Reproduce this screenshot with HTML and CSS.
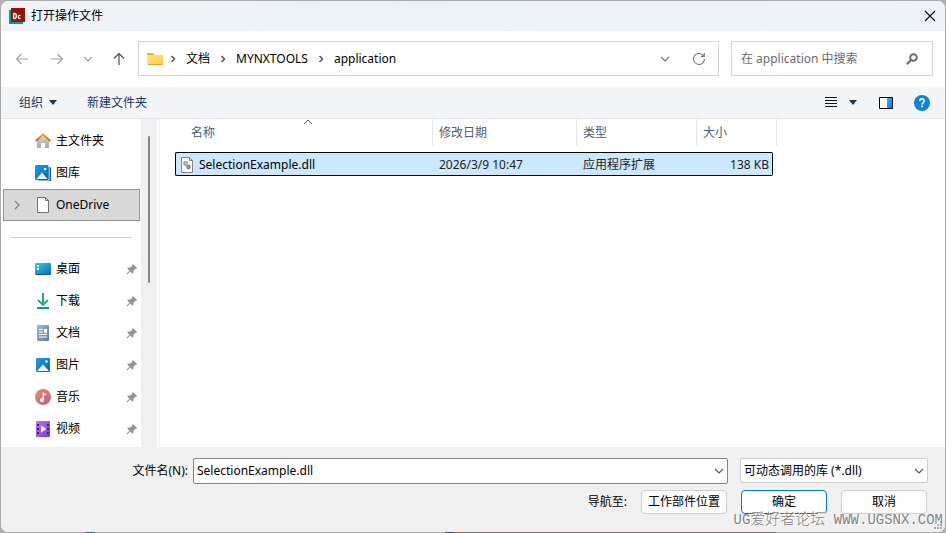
FILE: index.html
```html
<!DOCTYPE html>
<html lang="zh-CN">
<head>
<meta charset="utf-8">
<title>打开操作文件</title>
<link rel="stylesheet" href="styles.css">
</head>
<body>
<svg class="defs" aria-hidden="true">
  <defs>
    <linearGradient id="folder" x1="0" y1="0" x2="1" y2="1"><stop offset="0" stop-color="#ffe794"/><stop offset="1" stop-color="#ffc938"/></linearGradient>
    <linearGradient id="blue" x1="0" y1="0" x2="1" y2="1"><stop offset="0" stop-color="#1c9ee8"/><stop offset="1" stop-color="#0664b8"/></linearGradient>
    <linearGradient id="pane" x1="0" y1="0" x2="1" y2="1"><stop offset="0" stop-color="#30b4f2"/><stop offset="1" stop-color="#0a7fd6"/></linearGradient>
    <linearGradient id="teal" x1="0" y1="0" x2="1" y2="1"><stop offset="0" stop-color="#35d0de"/><stop offset="1" stop-color="#0b66c0"/></linearGradient>
    <linearGradient id="wall" x1="0" y1="0" x2="0" y2="1"><stop offset="0" stop-color="#d6d6d6"/><stop offset="1" stop-color="#a9a9a9"/></linearGradient>
    <linearGradient id="roof" x1="0" y1="0" x2="1" y2="0"><stop offset="0" stop-color="#d8601c"/><stop offset=".5" stop-color="#f8a030"/><stop offset="1" stop-color="#d8601c"/></linearGradient>
    <linearGradient id="slate" x1="0" y1="0" x2="1" y2="1"><stop offset="0" stop-color="#a5bad0"/><stop offset="1" stop-color="#5f7c9e"/></linearGradient>
    <linearGradient id="green" x1="0" y1="0" x2="0" y2="1"><stop offset="0" stop-color="#3cc08c"/><stop offset="1" stop-color="#129b8c"/></linearGradient>
    <linearGradient id="music" x1="0" y1="0" x2="1" y2="1"><stop offset="0" stop-color="#ee8d59"/><stop offset="1" stop-color="#b0609a"/></linearGradient>
    <linearGradient id="violet" x1="0" y1="0" x2="1" y2="1"><stop offset="0" stop-color="#b377f0"/><stop offset="1" stop-color="#7f37d8"/></linearGradient>
    <symbol id="pin" viewBox="0 0 12 12"><path fill="#8b979f" d="M7 1 11 5 10 6 9.300 5.800 7.500 7.800 7.400 10 6.500 10.800 4.200 8.600 1.500 11.300.7 11.300.7 10.500 3.400 7.800 1.200 5.500 2 4.600 4.300 4.600 6.300 2.700 6.100 1.900Z"/></symbol>
    <symbol id="next" viewBox="0 0 6 8"><path d="M1.500 1 4.500 4 1.500 7" fill="none" stroke="#555" stroke-width="1.500"/></symbol>
    <symbol id="down" viewBox="0 0 10 6"><path d="M1 1 5 5 9 1" fill="none" stroke="currentColor" stroke-width="1.100"/></symbol>
  </defs>
</svg>
<main class="dialog">
  <header class="titlebar">
    <svg class="app" width="16" height="16" viewBox="0 0 16 16"><path fill="#07999b" d="M0 2h14v14H0z"/><path fill="#94130b" d="M2 0h14v14H2z"/><path fill="none" stroke="#fff" stroke-width="1.300" d="M4.600 5.500v5M4.600 5.500h1q1.700 0 1.700 2.500t-1.700 2.500h-1M11.500 7.700q-2.200-.9-2.200 1.200t2.200 1.300"/></svg>
    <h1>打开操作文件</h1>
    <button class="close" aria-label="关闭"><svg width="12" height="12" viewBox="0 0 12 12"><path d="M1 1 11 11M11 1 1 11" stroke="#111" stroke-width="1.200"/></svg></button>
  </header>

  <nav class="navbar" aria-label="导航">
    <div class="arrows">
      <button aria-label="后退"><svg width="14" height="14" viewBox="0 0 14 14"><path d="M13 7H1.500M6.500 2l-5 5 5 5" fill="none" stroke="#a3a3a3" stroke-width="1.200"/></svg></button>
      <button aria-label="前进"><svg width="14" height="14" viewBox="0 0 14 14"><path d="M1 7h11.500M7.500 2l5 5-5 5" fill="none" stroke="#a3a3a3" stroke-width="1.200"/></svg></button>
      <button class="recent" aria-label="最近位置"><svg width="10" height="6"><use href="#down"/></svg></button>
      <button aria-label="上移"><svg width="14" height="14" viewBox="0 0 14 14"><path d="M7 13V1.500M2 6.500l5-5 5 5" fill="none" stroke="#5c5c5c" stroke-width="1.300"/></svg></button>
    </div>
    <div class="address">
      <svg width="16" height="14" viewBox="0 0 16 14"><path fill="#f3ac12" d="M0 2Q0 1 1 1h4.500L7.500 3H15q1 0 1 1v5H0z"/><rect y="3" width="16" height="10" rx="1" fill="url(#folder)"/><path stroke="#e0a526" d="M1 12.500h14"/></svg>
      <svg width="6" height="8"><use href="#next"/></svg>
      <a href="#docs">文档</a>
      <svg width="6" height="8"><use href="#next"/></svg>
      <a href="#tools">MYNXTOOLS</a>
      <svg width="6" height="8"><use href="#next"/></svg>
      <a href="#application">application</a>
      <button class="history" aria-label="以前的位置"><svg width="10" height="6"><use href="#down"/></svg></button>
      <button aria-label="刷新"><svg width="14" height="14" viewBox="0 0 14 14"><path d="M12.500 7A5.500 5.500 0 1 1 10.800 3L12 4.200M12.300 1v3.500H8.800" fill="none" stroke="#777" stroke-width="1.100"/></svg></button>
    </div>
    <form class="search">
      <input type="text" aria-label="搜索" placeholder="在 application 中搜索">
      <button type="button" aria-label="搜索"><svg width="12" height="12" viewBox="0 0 12 12"><circle cx="7.500" cy="4.500" r="3.300" fill="none" stroke="#6a6a6a" stroke-width="1.900"/><path d="M5 7 .8 11.200" stroke="#6a6a6a" stroke-width="2"/></svg></button>
    </form>
  </nav>

  <div class="toolbar">
    <button>组织 <svg class="caret" width="8" height="5" viewBox="0 0 8 5"><path d="M0 0h8L4 5z" fill="#1c3763"/></svg></button>
    <button>新建文件夹</button>
    <div class="views">
      <button aria-label="视图"><svg width="12" height="11" viewBox="0 0 12 11"><path d="M0 .5h12M0 3.500h12M0 6.500h12M0 9.500h12" stroke="#111"/></svg></button>
      <button class="more" aria-label="更多视图"><svg width="8" height="5" viewBox="0 0 8 5"><path d="M0 0h8L4 5z" fill="#1c3763"/></svg></button>
      <button class="preview" aria-label="预览窗格"><svg width="14" height="12" viewBox="0 0 14 12"><path fill="#fff" d="M0 0h14v12H0z"/><path fill="url(#pane)" d="M8 1h5v10H8z"/><path d="M.5.5h13v11H.5z" fill="none" stroke="#000"/></svg></button>
      <button aria-label="帮助"><svg width="16" height="16" viewBox="0 0 16 16"><circle cx="8" cy="8" r="8" fill="#0b84da"/><path d="M5.900 6q0-2.100 2.100-2.100T10.100 6Q10.100 7 9 7.800 8.100 8.400 8.100 9.400M8.100 10.500v1.700" fill="none" stroke="#fff" stroke-width="1.600"/></svg></button>
    </div>
  </div>

  <section class="content">
    <aside class="sidebar">
      <ul>
        <li><a href="#home"><svg class="ico" viewBox="0 0 16 16"><path fill="url(#wall)" d="M2 7 8 2l6 5v8H10v-5H6v5H2z"/><path d="M.8 8 8 1.500 15.200 8" fill="none" stroke="url(#roof)" stroke-width="2"/></svg><span>主文件夹</span></a></li>
        <li><a href="#gallery"><svg class="ico" viewBox="0 0 16 16"><path fill="#0a5fae" d="M3 2h12q1 0 1 1v13H3z"/><path fill="#fff" d="M13.500 0h1v15.500H2v-1h11.500z"/><rect width="13.500" height="15" rx="1" fill="url(#blue)"/><path fill="#f1f8fe" d="M1.500 14 7 7.500l5.500 6.500z"/><circle cx="10" cy="4" r="1.300" fill="#fff"/></svg><span>图库</span></a></li>
        <li class="current"><a href="#onedrive"><svg class="expand" width="6" height="10" viewBox="0 0 6 10"><path d="M1 1 5 5 1 9" fill="none" stroke="#858585" stroke-width="1.400"/></svg><svg class="ico" viewBox="0 0 16 16"><path fill="#fff" stroke="#717171" d="M2.500.5h8l3 3v12h-11z"/><path fill="none" stroke="#717171" d="M10.500.5v3h3"/></svg><span>OneDrive</span></a></li>
      </ul>
      <hr>
      <ul>
        <li><a href="#desktop"><svg class="ico" viewBox="0 0 16 16"><rect y="2" width="16" height="12" rx="1" fill="url(#teal)"/><path fill="#fff" d="M2 4h2v2H2zM2 7h2v2H2z"/><path stroke="#07519b" d="M1 13.500h14" stroke-dasharray="10 1 1 1"/></svg><span>桌面</span><svg class="pin"><use href="#pin"/></svg></a></li>
        <li><a href="#downloads"><svg class="ico" viewBox="0 0 16 16"><path d="M8 0v12M3 7l5 5 5-5M2 15h12" fill="none" stroke="url(#green)" stroke-width="1.800"/><path d="M8 0v12" stroke="#26ad8c" stroke-width="2"/><path d="M2 15h12" stroke="#129b8c" stroke-width="2"/></svg><span>下载</span><svg class="pin"><use href="#pin"/></svg></a></li>
        <li><a href="#documents"><svg class="ico" viewBox="0 0 16 16"><rect x="2" width="12" height="16" rx="1" fill="url(#slate)"/><path d="M4 4.500h4M4 7h4M4 9.500h8M4 12h8" stroke="#fff"/><path fill="#fff" d="M9 4h3v4H9z"/></svg><span>文档</span><svg class="pin"><use href="#pin"/></svg></a></li>
        <li><a href="#pictures"><svg class="ico" viewBox="0 0 16 16"><rect x="1" y="1" width="14" height="14" rx="1" fill="url(#blue)"/><path fill="#f1f8fe" d="M2 14 8 7.500l6 6.500z"/><circle cx="11.500" cy="4.500" r="1.300" fill="#fff"/></svg><span>图片</span><svg class="pin"><use href="#pin"/></svg></a></li>
        <li><a href="#music"><svg class="ico" viewBox="0 0 16 16"><circle cx="8" cy="8" r="8" fill="url(#music)"/><circle cx="7" cy="11" r="2" fill="#fff"/><path d="M8.300 11V3.500q.3 1.800 2.800 2" fill="none" stroke="#fff" stroke-width="1.500"/></svg><span>音乐</span><svg class="pin"><use href="#pin"/></svg></a></li>
        <li><a href="#videos"><svg class="ico" viewBox="0 0 16 16"><rect x="1" y="0" width="14" height="16" rx="1" fill="url(#violet)"/><path d="M3 3v11M13 3v11" stroke="#43207c" stroke-width="2" stroke-dasharray="2 2"/><path fill="#fff" d="M6 4.500 11.500 8 6 11.500z"/></svg><span>视频</span><svg class="pin"><use href="#pin"/></svg></a></li>
      </ul>
    </aside>
    <div class="track"><div class="thumb"></div></div>
    <div class="files">
      <table>
        <colgroup><col class="c-name"><col class="c-date"><col class="c-type"><col class="c-size"><col class="c-end"></colgroup>
        <thead><tr>
          <th scope="col">名称<svg class="sort" width="10" height="6" viewBox="0 0 10 6"><path d="M1 5 5 1 9 5" fill="none" stroke="#555"/></svg></th>
          <th scope="col">修改日期</th><th scope="col">类型</th><th scope="col" colspan="2">大小</th>
        </tr></thead>
        <tbody><tr>
          <td><div class="file"><svg width="12" height="16" viewBox="0 0 12 16"><path fill="#fff" stroke="#858585" d="M.5.500H8.500l3 3v12H.5z"/><path d="M8.500.5v3h3" fill="none" stroke="#858585"/><circle cx="4.500" cy="6.500" r="1.700" fill="#c3c8cd" stroke="#9aa3ab" stroke-width="1.500"/><circle cx="7.500" cy="10" r="1.500" fill="#c3c8cd" stroke="#6d7780" stroke-width="1.400"/></svg>SelectionExample.dll</div></td>
          <td>2026/3/9 10:47</td><td>应用程序扩展</td><td class="num">138 KB</td>
        </tr></tbody>
      </table>
    </div>
  </section>

  <footer class="footer">
    <label for="filename">文件名(N):</label>
    <div class="combo name">
      <input id="filename" type="text" value="SelectionExample.dll">
      <button aria-label="展开"><svg width="10" height="6"><use href="#down"/></svg></button>
    </div>
    <div class="combo filter">
      <select aria-label="文件类型"><option>可动态调用的库 (*.dll)</option></select>
      <svg width="10" height="6"><use href="#down"/></svg>
    </div>
    <div class="actions">
      <span>导航至:</span>
      <button class="btn">工作部件位置</button>
      <button class="btn primary">确定</button>
      <button class="btn">取消</button>
    </div>
  </footer>
  <svg class="grip" width="10" height="10" viewBox="0 0 10 10"><path fill="#aaa" d="M7 1h2v2H7zM4 4h2v2H4zM7 4h2v2H7zM1 7h2v2H1zM4 7h2v2H4zM7 7h2v2H7z"/></svg>
  <p class="watermark">UG<span>爱好者论坛</span> WWW.UGSNX.COM</p>
</main>
</body>
</html>
```
FILE: styles.css
```css
* { box-sizing: border-box; }

body {
  margin: 0;
  font: 12px/16px "Noto Sans", "Noto Sans CJK SC", sans-serif;
  color: #000;
  background: #b0b0b4;
}

.defs { position: absolute; width: 0; height: 0; }
svg { display: block; flex: none; }
button, input, select { font: inherit; color: inherit; margin: 0; }
button { border: 0; background: none; padding: 0; display: flex; align-items: center; justify-content: center; }
a { color: inherit; text-decoration: none; }
h1, p, ul { margin: 0; padding: 0; list-style: none; font: inherit; }

.dialog {
  position: relative;
  display: flex;
  flex-direction: column;
  min-height: 100vh;
  border: 1px solid #aaa;
  border-bottom-color: transparent;
  border-radius: 8px;
  overflow: hidden;
  background:
    linear-gradient(#fff, #fff) padding-box,
    linear-gradient(90deg, #aaa 9%, #4159a8 9% 10%, #aaa 10% 47%, #433a92 47% 48%, #857049 48% 82%, #aaa 82%) border-box;
}

.titlebar {
  display: flex;
  align-items: center;
  gap: 6px;
  height: 30px;
  padding: 0 9px 0 8px;
  background: linear-gradient(90deg, #f0f3f8, #ebf2f7 35%, #eef2fa);
}
.close { margin-left: auto; }

.navbar {
  display: flex;
  align-items: center;
  gap: 12px;
  height: 56px;
  padding: 0 12px 1px 14px;
}
.arrows { display: flex; gap: 21px; width: 111px; color: #999; }
.recent { margin: 0 -4px; width: 16px; }
.address {
  display: flex;
  flex: 1;
  align-items: center;
  gap: 10px;
  height: 35px;
  padding: 0 12px 0 8px;
  border: 1px solid #d5d5d5;
}
.address > svg:first-child { margin-right: -3px; }
.history { margin: 0 12px 0 auto; color: #777; }
.search {
  display: flex;
  width: 202px;
  height: 35px;
  padding: 0 14px 0 9px;
  border: 1px solid #d5d5d5;
}
.search input { flex: 1; min-width: 0; border: 0; padding: 0; outline: 0; background: none; }
.search input::placeholder { color: #6b6b6b; opacity: 1; }

.toolbar {
  display: flex;
  align-items: center;
  gap: 30px;
  height: 32px;
  padding: 0 15px 0 18px;
  border-bottom: 1px solid #e6e7ea;
  background: #f4f5f8;
  color: #1c3763;
}
.caret { margin-left: 6px; }
.views { display: flex; margin-left: auto; }
.more { margin: 0 22px 0 12px; }
.preview { margin-right: 21px; }

.content { display: flex; flex: 1; min-height: 328px; }
.sidebar { width: 140px; padding: 6px 1px 0 2px; }
.sidebar a {
  display: flex;
  align-items: center;
  gap: 5px;
  height: 32px;
  padding: 0 2px 0 32px;
}
.ico { width: 16px; height: 16px; }
.pin { width: 12px; height: 12px; margin-left: auto; }
.sidebar .current a { padding-left: 10px; border: 1px solid #929292; background: #d9d9d9; }
.expand { margin-right: 10px; }
.sidebar hr { height: 1px; margin: 16px 8px 15px; border: 0; background: #cfcfcf; }
.track { width: 16px; padding-top: 17px; background: #f0f0f0; }
.thumb { width: 2px; height: 147px; margin-left: 7px; border-radius: 1px; background: #858585; }
.files { flex: 1; margin-left: 2px; padding-left: 15px; border-left: 1px solid #f2f2f2; }

table { width: 602px; table-layout: fixed; border-collapse: separate; border-spacing: 0; }
.c-name { width: 258px; }
.c-date { width: 144px; }
.c-type { width: 120px; }
.c-size { width: 76px; }
.c-end { width: 4px; }
th {
  position: relative;
  height: 27px;
  padding: 0 6px;
  border-right: 1px solid #e5e5e5;
  font-weight: normal;
  text-align: left;
  color: #4c607a;
}
th:first-child { padding-left: 16px; }
.sort { position: absolute; top: 0; left: 128px; }
tbody::before { content: ""; display: block; height: 6px; }
td {
  height: 24px;
  padding: 1px 6px 0;
  border: solid #000;
  border-width: 1px 0;
  background: #cce8ff;
  color: #222;
}
td:first-child { padding-left: 5px; border-left-width: 1px; border-radius: 2px 0 0 2px; color: #000; }
td:last-child { padding: 1px 3px 0; border-right-width: 1px; border-radius: 0 2px 2px 0; }
.file { display: flex; align-items: center; gap: 6px; }
.num { text-align: right; }

.footer {
  display: grid;
  grid-template-columns: 187px 1fr 188px;
  column-gap: 12px;
  row-gap: 6px;
  height: 85px;
  padding: 11px 17px 0 0;
  align-content: start;
  background: #f0f0f0;
}
.footer label { align-self: center; text-align: right; }
.combo { display: flex; align-items: center; height: 26px; color: #555; }
.name { margin-left: -7px; border: 1px solid #858585; border-radius: 2px; background: #fff; }
.name input { flex: 1; min-width: 0; border: 0; padding: 0 3px; outline: 0; background: none; color: #000; }
.name button { width: 16px; height: 24px; }
.filter { display: grid; height: 25px; }
.filter select {
  grid-area: 1 / 1;
  width: 100%;
  height: 25px;
  padding: 0 3px;
  appearance: none;
  border: 1px solid #cfcfcf;
  border-radius: 2px;
  background: #fdfdfd;
  color: #000;
}
.filter svg { grid-area: 1 / 1; justify-self: end; margin-right: 4px; pointer-events: none; }
.actions { grid-column: 1 / -1; display: flex; align-items: center; justify-content: flex-end; gap: 14px; padding-right: 1px; }
.btn { width: 86px; height: 24px; border: 1px solid #d0d0d0; border-radius: 4px; background: #fdfdfd; }
.primary { border-color: #0078d4; }

.grip { position: absolute; right: 2px; bottom: 2px; }
.watermark {
  position: absolute;
  right: 2px;
  bottom: 2px;
  font: 14px/18px "Liberation Mono", "Noto Sans CJK SC", monospace;
  color: #858585;
  text-shadow: 1px 1px 0 #fff;
  white-space: nowrap;
  pointer-events: none;
}
.watermark span { font-size: 15px; font-weight: 300; }
```
